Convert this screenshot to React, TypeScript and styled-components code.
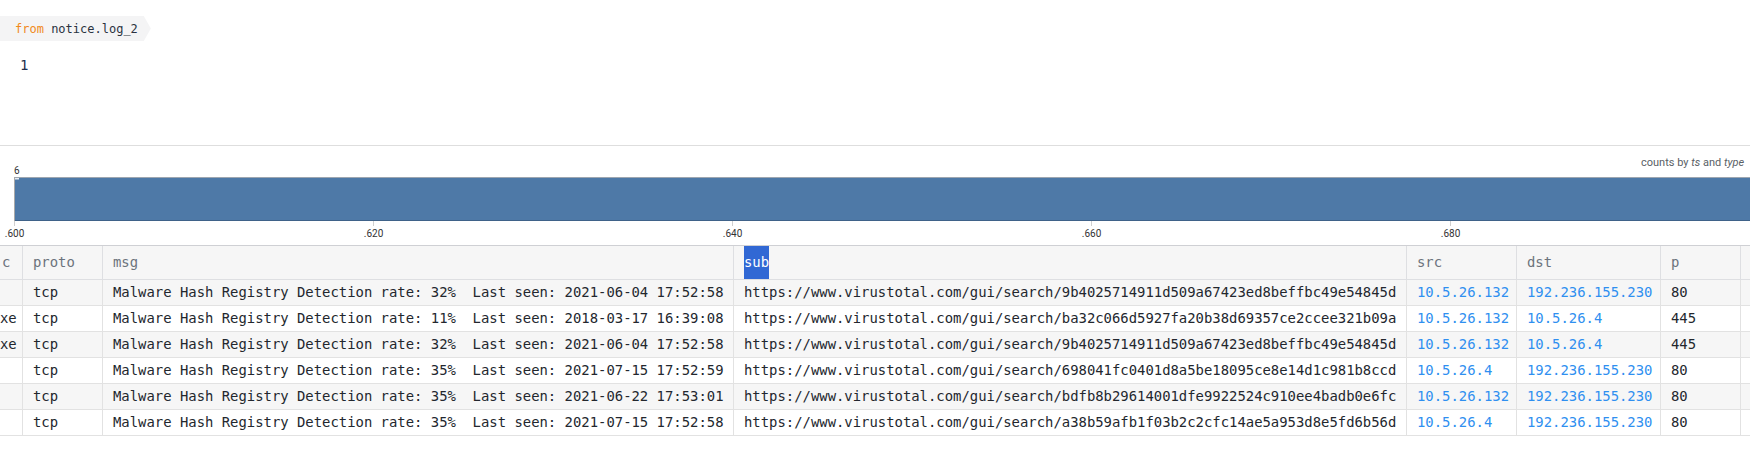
import React from "react";
import styled, { createGlobalStyle } from "styled-components";

const GlobalStyle = createGlobalStyle`
  html, body {
    margin: 0;
    padding: 0;
    background: #ffffff;
    overflow: hidden;
  }
  body {
    font-family: "DejaVu Sans Mono", "Liberation Mono", monospace;
  }
`;

const MONO = `"DejaVu Sans Mono", "Liberation Mono", monospace`;

const Page = styled.div`
  width: 1750px;
  height: 449px;
  overflow: hidden;
  display: flex;
  flex-direction: column;
`;

const EditorPane = styled.section`
  box-sizing: border-box;
  height: 146px;
  flex: none;
  border-bottom: 1px solid #dedede;
  padding-top: 16px;
  display: flex;
  flex-direction: column;
  align-items: flex-start;
`;

const SourceTag = styled.div`
  display: inline-flex;
  align-items: center;
  height: 25px;
  padding: 0 13px 0 15px;
  background: #f4f4f5;
  clip-path: polygon(0 0, calc(100% - 7px) 0, 100% 50%, calc(100% - 7px) 100%, 0 100%);
  font-family: ${MONO};
  font-size: 12px;
  color: #2a3240;
  white-space: pre;
`;

const Keyword = styled.span`
  color: #f18a1c;
`;

const CodeLine = styled.div`
  margin-top: 14px;
  padding-left: 20px;
  font-family: ${MONO};
  font-size: 14px;
  line-height: 20px;
  color: #22304c;
`;

const ChartPane = styled.section`
  height: 99px;
  flex: none;
  overflow: hidden;
`;

const ChartSvg = styled.svg`
  display: block;
  font-family: Roboto, "Liberation Sans", sans-serif;
`;

const Table = styled.div`
  width: 1950px;
  flex: none;
  font-family: ${MONO};
  font-size: 13.9px;
`;

const COLS = "23px 80px 631px 673px 110px 144px 80px 209px";

const HeaderRow = styled.div`
  display: grid;
  grid-template-columns: ${COLS};
  height: 35px;
  box-sizing: border-box;
  border-top: 1px solid #cfd0d4;
  border-bottom: 1px solid #dedfe2;
  background: #f6f6f6;
`;

const Row = styled.div<{ $alt: boolean }>`
  display: grid;
  grid-template-columns: ${COLS};
  height: 26px;
  box-sizing: border-box;
  border-bottom: 1px solid #e2e2e2;
  background: ${(p) => (p.$alt ? "#f6f6f6" : "#ffffff")};
`;

const HeadCell = styled.div<{ $clip?: boolean }>`
  box-sizing: border-box;
  border-right: 1px solid #dedfe2;
  padding-left: ${(p) => (p.$clip ? "2px" : "10px")};
  line-height: 33px;
  color: #6c737c;
  white-space: pre;
  overflow: hidden;
`;

const Selected = styled.span`
  display: inline-block;
  background: #3168d4;
  color: #ffffff;
  line-height: 33px;
  height: 33px;
`;

const Cell = styled.div<{ $clip?: boolean; $link?: boolean }>`
  box-sizing: border-box;
  border-right: 1px solid #e2e2e2;
  padding-left: ${(p) => (p.$clip ? "0px" : "10px")};
  line-height: 25px;
  color: ${(p) => (p.$link ? "#2f8ff0" : "#23272e")};
  white-space: pre;
  overflow: hidden;
`;

type Rec = {
  c: string;
  proto: string;
  rate: string;
  seen: string;
  hash: string;
  src: string;
  dst: string;
  p: string;
};

const rows: Rec[] = [
  { c: "", proto: "tcp", rate: "32%", seen: "2021-06-04 17:52:58", hash: "9b4025714911d509a67423ed8beffbc49e54845d", src: "10.5.26.132", dst: "192.236.155.230", p: "80" },
  { c: "xe", proto: "tcp", rate: "11%", seen: "2018-03-17 16:39:08", hash: "ba32c066d5927fa20b38d69357ce2ccee321b09a", src: "10.5.26.132", dst: "10.5.26.4", p: "445" },
  { c: "xe", proto: "tcp", rate: "32%", seen: "2021-06-04 17:52:58", hash: "9b4025714911d509a67423ed8beffbc49e54845d", src: "10.5.26.132", dst: "10.5.26.4", p: "445" },
  { c: "", proto: "tcp", rate: "35%", seen: "2021-07-15 17:52:59", hash: "698041fc0401d8a5be18095ce8e14d1c981b8ccd", src: "10.5.26.4", dst: "192.236.155.230", p: "80" },
  { c: "", proto: "tcp", rate: "35%", seen: "2021-06-22 17:53:01", hash: "bdfb8b29614001dfe9922524c910ee4badb0e6fc", src: "10.5.26.132", dst: "192.236.155.230", p: "80" },
  { c: "", proto: "tcp", rate: "35%", seen: "2021-07-15 17:52:58", hash: "a38b59afb1f03b2c2cfc14ae5a953d8e5fd6b56d", src: "10.5.26.4", dst: "192.236.155.230", p: "80" },
];

const ticks = [".600", ".620", ".640", ".660", ".680"];

function Chart() {
  return (
    <ChartSvg width={1750} height={99} viewBox="0 0 1750 99">
      <text x={1641} y={20} fontSize={11} fill="#5a5f66">
        counts by <tspan fontStyle="italic">ts</tspan> and <tspan fontStyle="italic">type</tspan>
      </text>
      <text x={14} y={28} fontSize={10} fill="#333">6</text>
      <rect x={14} y={32} width={1760} height={43} fill="#4e79a7" />
      <line x1={14} x2={1750} y1={31.5} y2={31.5} stroke="#9da6b0" strokeWidth={1} />
      <line x1={14} x2={1750} y1={74.5} y2={74.5} stroke="#3f6289" strokeWidth={1} />
      <line x1={14.5} x2={14.5} y1={31} y2={80} stroke="#a9a9a9" strokeWidth={1} />
      <rect x={15} y={32} width={4} height={1.5} fill="#e8edf3" />
      {ticks.map((t, i) => {
        const x = 14.5 + i * 359;
        return (
          <g key={t}>
            <line x1={x} x2={x} y1={75} y2={80} stroke="#d0d0d0" strokeWidth={1} />
            <text x={x} y={91} fontSize={10} fill="#333" textAnchor="middle">
              {t}
            </text>
          </g>
        );
      })}
    </ChartSvg>
  );
}

export default function App() {
  return (
    <>
      <GlobalStyle />
      <Page>
        <EditorPane>
          <SourceTag>
            <Keyword>from</Keyword> notice.log_2
          </SourceTag>
          <CodeLine>1</CodeLine>
        </EditorPane>
        <ChartPane>
          <Chart />
        </ChartPane>
        <Table>
          <HeaderRow>
            <HeadCell $clip>c</HeadCell>
            <HeadCell>proto</HeadCell>
            <HeadCell>msg</HeadCell>
            <HeadCell>
              <Selected>sub</Selected>
            </HeadCell>
            <HeadCell>src</HeadCell>
            <HeadCell>dst</HeadCell>
            <HeadCell>p</HeadCell>
            <HeadCell />
          </HeaderRow>
          {rows.map((r, i) => (
            <Row key={i} $alt={i % 2 === 0}>
              <Cell $clip>{r.c}</Cell>
              <Cell>{r.proto}</Cell>
              <Cell>{`Malware Hash Registry Detection rate: ${r.rate}  Last seen: ${r.seen}`}</Cell>
              <Cell>{`https://www.virustotal.com/gui/search/${r.hash}`}</Cell>
              <Cell $link>{r.src}</Cell>
              <Cell $link>{r.dst}</Cell>
              <Cell>{r.p}</Cell>
              <Cell />
            </Row>
          ))}
        </Table>
      </Page>
    </>
  );
}
